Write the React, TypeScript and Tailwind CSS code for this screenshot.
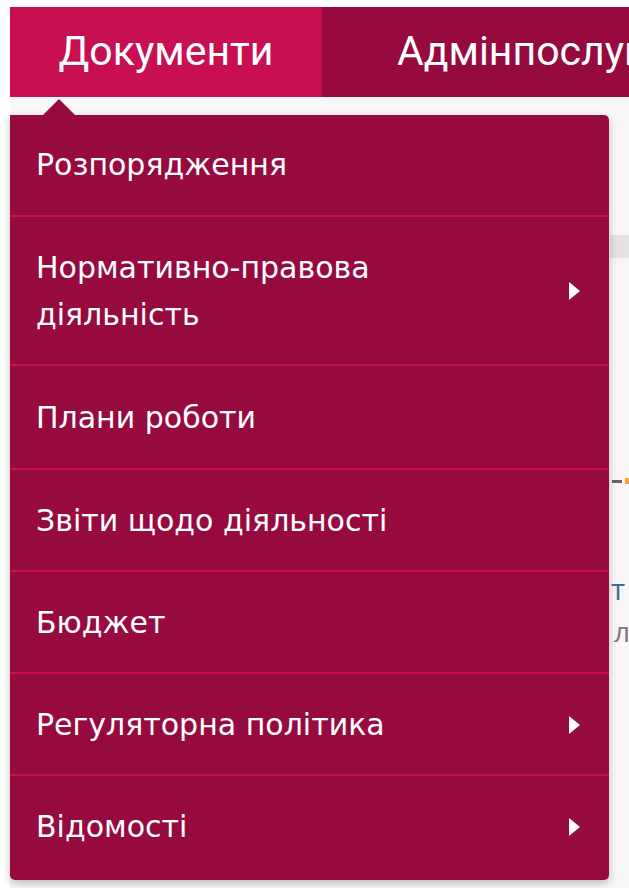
import React from 'react';

type Item = { label: string; sub?: boolean; pad: string };

const items: Item[] = [
  { label: 'Розпорядження', pad: 'pt-[26px] pb-[27px]' },
  { label: 'Нормативно-правова діяльність', sub: true, pad: 'pt-[27px] pb-[26px]' },
  { label: 'Плани роботи', pad: 'pt-[28px] pb-[27px]' },
  { label: 'Звіти щодо діяльності', pad: 'pt-[27px] pb-[26px]' },
  { label: 'Бюджет', pad: 'pt-[27px] pb-[26px]' },
  { label: 'Регуляторна політика', sub: true, pad: 'pt-[27px] pb-[26px]' },
  { label: 'Відомості', sub: true, pad: 'pt-[27px] pb-[30px]' },
];

const Caret = () => (
  <svg width="13" height="20" viewBox="0 0 13 20" className="shrink-0">
    <path d="M1 1 L12 10 L1 19 Z" fill="#ffffff" />
  </svg>
);

export default function App() {
  return (
    <div className="relative w-[629px] h-[888px] overflow-hidden bg-white pt-[7px]">
      <nav
        className="ml-[10px] flex h-[90px] overflow-hidden bg-[#970a40] text-white"
        style={{ fontFamily: 'Roboto, "Liberation Sans", sans-serif' }}
      >
        <a className="flex w-[312px] shrink-0 items-center justify-center bg-[#c70f52] text-[41px]">
          Документи
        </a>
        <a className="flex shrink-0 items-center whitespace-nowrap pl-[75px] text-[41px]">
          Адмінпослуги
        </a>
      </nav>

      {/* page content that sits behind the open menu */}
      <div className="ml-[10px] h-[800px] overflow-hidden bg-[#f7f7f7] pt-[138px]">
        <div className="ml-[600px] h-[23px] bg-[#e2e2e2]" />
        <div className="ml-[602px] mt-[220px] flex items-center gap-[3px]">
          <span className="block h-[3px] w-[10px] bg-[#666]" />
          <span className="block h-[6px] w-[4px] bg-[#f0a040]" />
        </div>
        <div
          className="ml-[601px] mt-[88px] whitespace-nowrap text-[30px] leading-[34px] text-[#3a6f9a]"
          style={{ fontFamily: '"Open Sans", sans-serif' }}
        >
          т
        </div>
        <div
          className="ml-[604px] mt-[8px] whitespace-nowrap text-[28px] leading-[34px] text-[#777]"
          style={{ fontFamily: '"Open Sans", sans-serif' }}
        >
          л
        </div>
      </div>

      {/* dropdown */}
      <div className="absolute left-[10px] top-[115px] w-[599px]">
        <div className="absolute left-[33px] top-[-16px] h-0 w-0 border-x-[16px] border-b-[16px] border-x-transparent border-b-[#970a40]" />
        <ul
          className="overflow-hidden rounded-b-[5px] rounded-tr-[5px] bg-[#970a40] text-white shadow-[0_3px_8px_rgba(0,0,0,0.25)]"
          style={{ fontFamily: 'Tahoma, "DejaVu Sans", sans-serif' }}
        >
          {items.map((it, i) => (
            <li
              key={it.label}
              className={`flex items-center justify-between pl-[26px] pr-[28px] ${it.pad} ${
                i > 0 ? 'border-t-2 border-[#cc0e4f]' : ''
              }`}
            >
              <span className="max-w-[400px] text-[30px] leading-[47px]">{it.label}</span>
              {it.sub && <Caret />}
            </li>
          ))}
        </ul>
      </div>
    </div>
  );
}
